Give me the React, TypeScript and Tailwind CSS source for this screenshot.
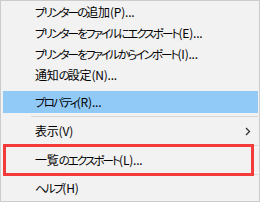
import React from "react";

const font = {
  fontFamily: '"Noto Sans CJK JP", "Noto Sans", sans-serif',
};

function Label({ text }: { text: string }) {
  const parts = text.split(/([\u3040-\u30ff]+)/).filter((p) => p.length > 0);
  return (
    <span className="leading-none whitespace-nowrap [font-feature-settings:'palt']">
      {parts.map((p, i) =>
        /^[\u3040-\u30ff]+$/.test(p) ? (
          <span key={i} className="text-[11.5px] tracking-[-1.9px]">
            {p}
          </span>
        ) : (
          <span key={i} className="tracking-[-0.2px]">{p}</span>
        )
      )}
    </span>
  );
}

function Row({ label, h, children }: { label: string; h: string; children?: React.ReactNode }) {
  return (
    <div className={`flex items-center pl-[32px] text-[12px] text-black ${h}`}>
      <Label text={label} />
      {children}
    </div>
  );
}

export default function App() {
  return (
    <div className="relative w-[261px] h-[203px] bg-white" style={font}>
      <div className="w-[260px] h-[202px] border border-[#cccccc] bg-[#f2f2f2] pt-[1px] pl-[2px] pr-[1px] flex flex-col">
        <Row label="プリンターの追加(P)..." h="h-[21px]" />
        <Row label="プリンターをファイルにエクスポート(E)..." h="h-[21px]" />
        <Row label="プリンターをファイルからインポート(I)..." h="h-[21px]" />
        <Row label="通知の設定(N)..." h="h-[21px]" />
        <div className="mt-[5px] bg-[#91c9f7]">
          <Row label="プロパティ(R)..." h="h-[22px]" />
        </div>
        <div className="mt-[3px] ml-[28px] h-[1px] bg-[#d7d7d7]" />
        <div className="relative">
          <Row label="表示(V)" h="h-[28px]" />
          <svg className="absolute left-[242px] top-[10px]" width="6" height="9" viewBox="0 0 6 9">
            <polyline points="1,1 4.5,4.5 1,8" fill="none" stroke="#333" strokeWidth="1.3" />
          </svg>
        </div>
        <div className="ml-[28px] h-[1px] bg-[#d7d7d7]" />
        <Row label="一覧のエクスポート(L)..." h="h-[28px]" />
        <div className="ml-[28px] h-[1px] bg-[#d7d7d7]" />
        <Row label="ヘルプ(H)" h="h-[26px]" />
      </div>
      <div className="absolute left-[3px] top-[144px] w-[251px] h-[32px] border-[3px] border-[#f33b3b]" />
    </div>
  );
}
